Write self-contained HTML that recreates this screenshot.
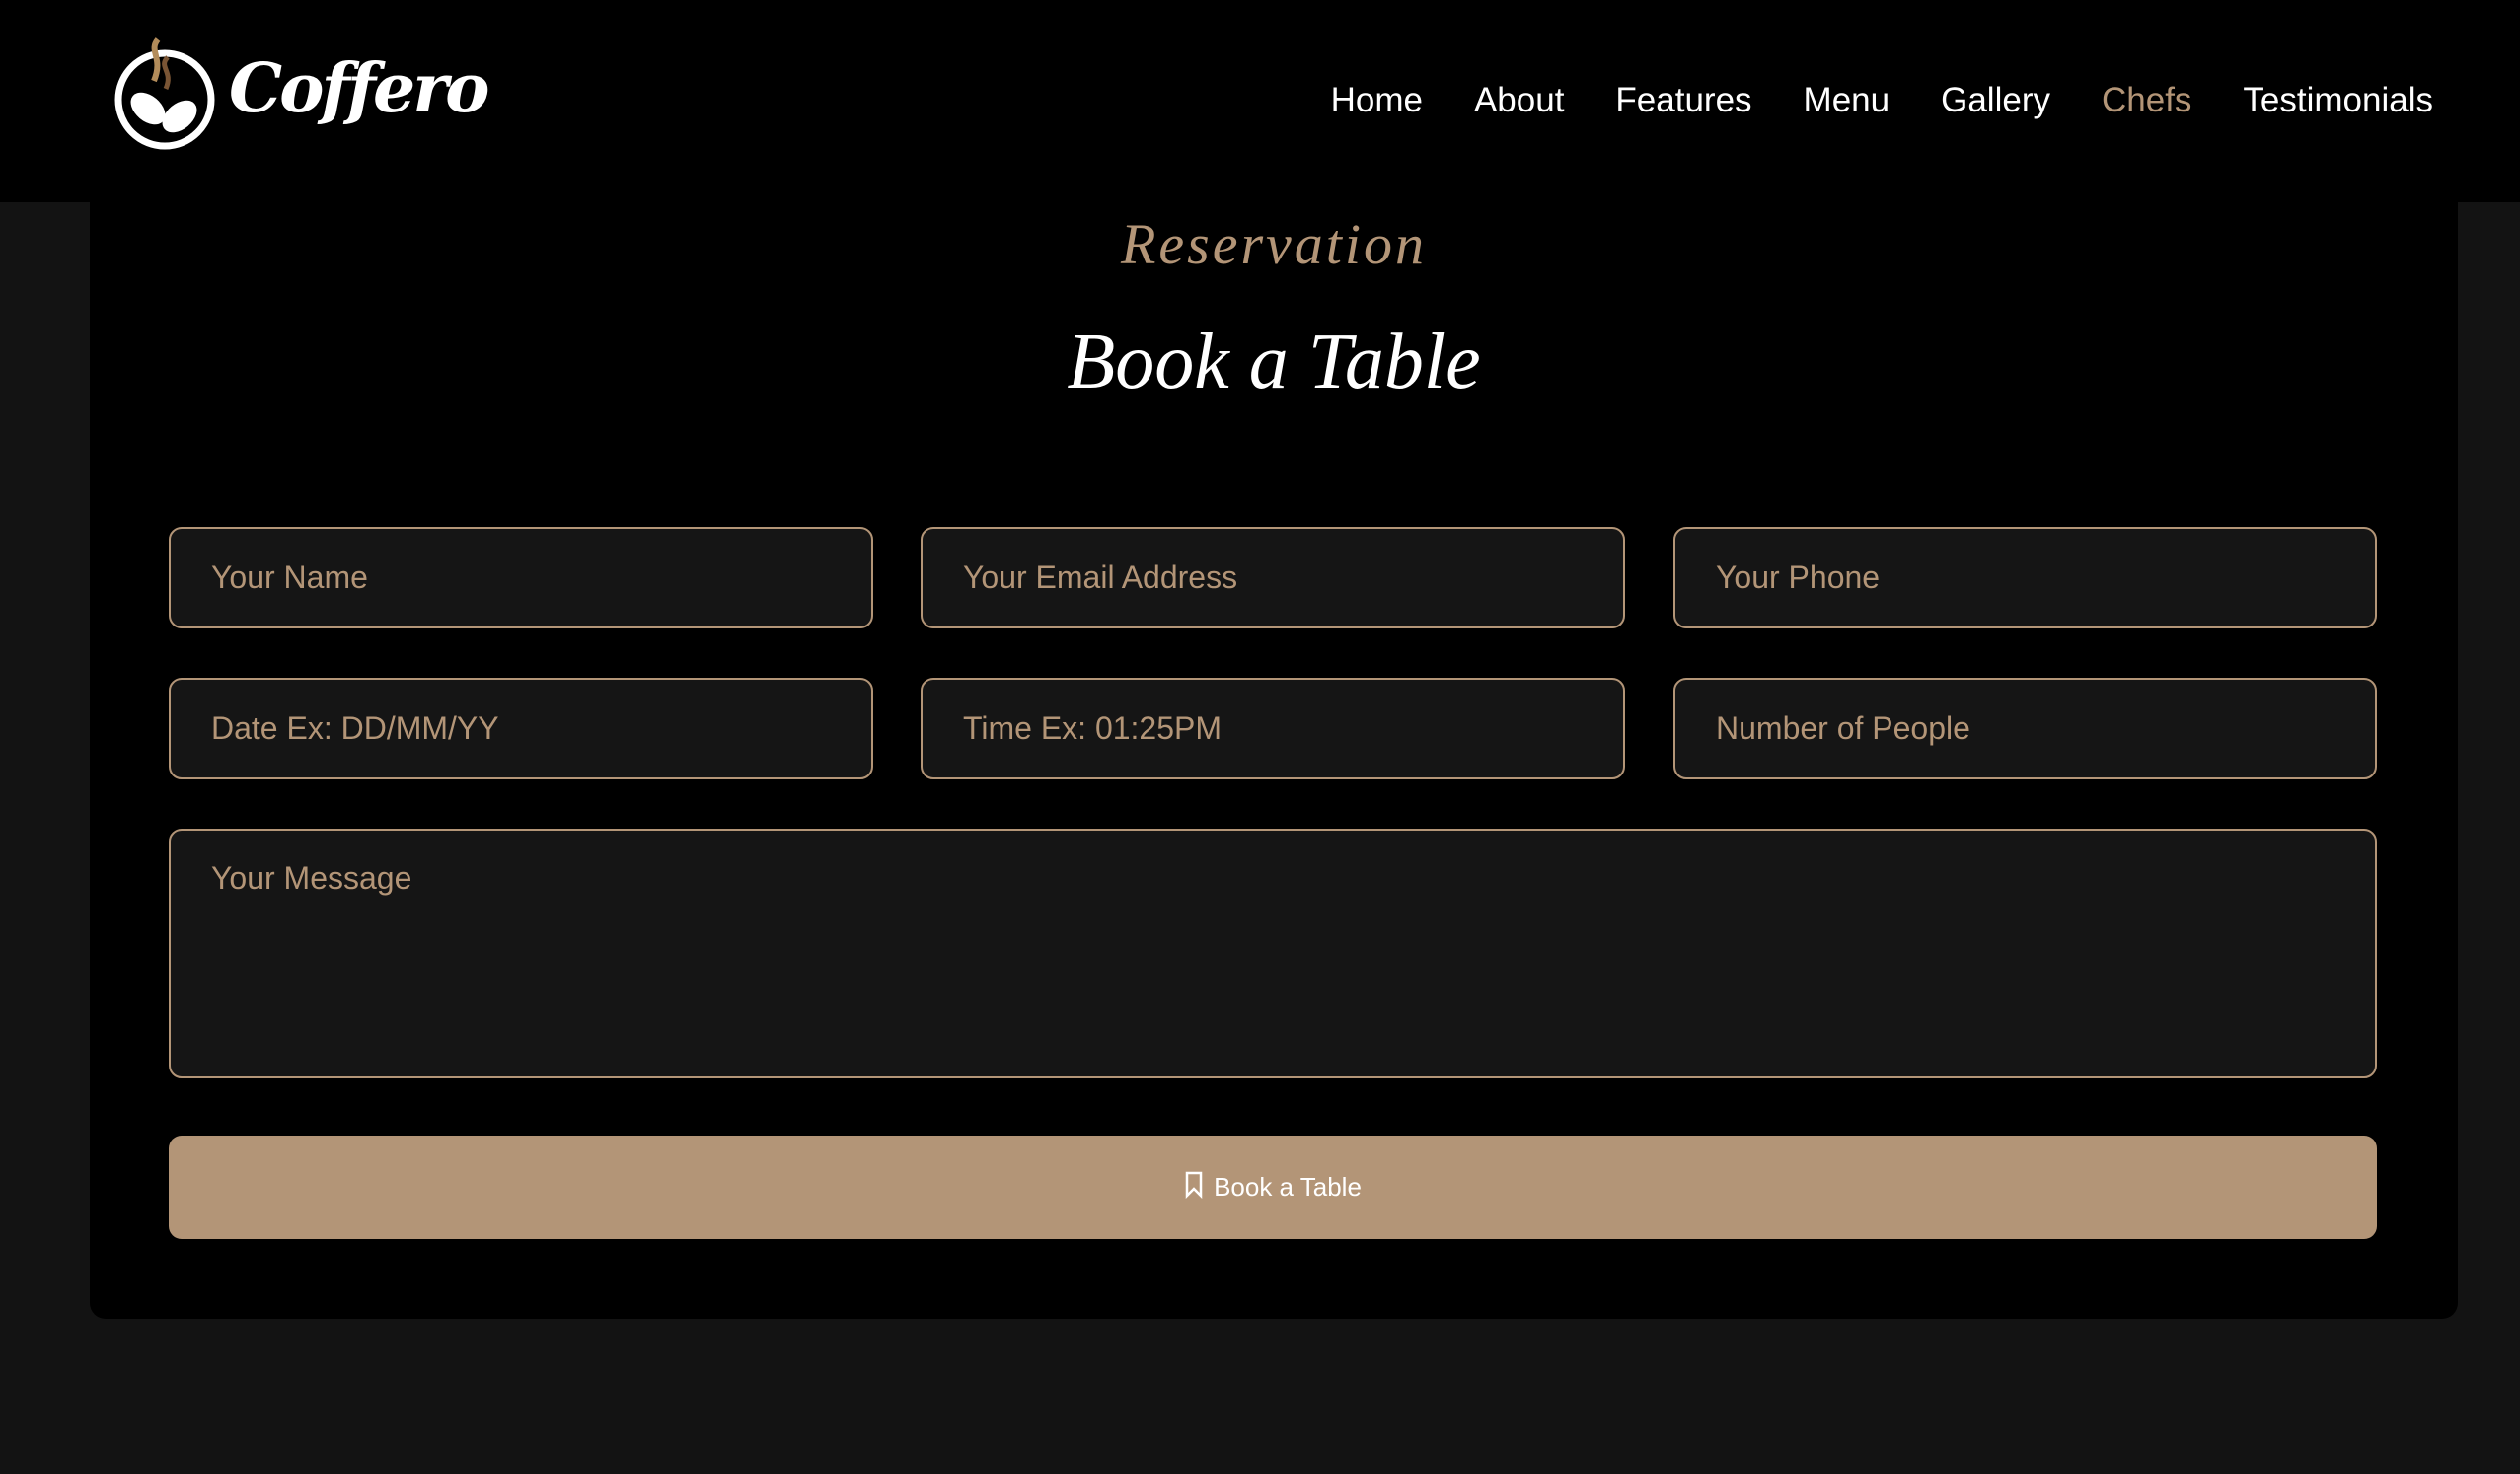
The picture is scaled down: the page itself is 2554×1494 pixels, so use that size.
<!DOCTYPE html>
<html><head><meta charset="utf-8"><style>
*{margin:0;padding:0;box-sizing:border-box}
html,body{width:2554px;height:1494px;background:#131313;overflow:hidden;font-family:"Liberation Sans",sans-serif}
.hdr{position:absolute;left:0;top:0;width:2554px;height:205px;background:#000}
.nav{position:absolute;top:78px;right:88px;display:flex;gap:0}
.nav span{color:#fff;font-size:35px;margin-left:52px;line-height:48px}
.nav span.a{color:#b39577}
.main{position:absolute;left:91px;top:205px;width:2400px;height:1132px;background:#000;border-radius:0 0 16px 16px}
.sub{position:absolute;left:91px;width:2400px;text-align:center;top:214px;font-family:"Liberation Serif",serif;font-style:italic;color:#b39577;font-size:58px;letter-spacing:3px}
.ttl{position:absolute;left:91px;width:2400px;text-align:center;top:322px;font-family:"Liberation Serif",serif;font-style:italic;color:#fff;font-size:80px}
.in{position:absolute;background:#151515;border:2px solid #b39577;border-radius:13px;color:#b39577;font-size:32px;padding-left:41px;display:flex;align-items:center}
.ta{align-items:flex-start;padding-top:30px}
.btn{position:absolute;left:171px;top:1151px;width:2238px;height:105px;background:#b39577;border-radius:13px;color:#fff;font-size:26px;display:flex;align-items:center;justify-content:center}
</style></head><body>
<div class="hdr">
<svg style="position:absolute;left:112px;top:38px" width="110" height="120" viewBox="0 0 110 120">
<circle cx="55" cy="63" r="47" fill="none" stroke="#fff" stroke-width="7"/>
<path d="M48 2c-10 12 6 18-4 42" stroke="#b38c5a" stroke-width="6" fill="none"/>
<path d="M58 20c-10 10 6 14-2 32" stroke="#7a5535" stroke-width="5" fill="none"/>
<ellipse cx="38" cy="72" rx="13" ry="20" transform="rotate(-50 38 72)" fill="#fff"/>
<ellipse cx="70" cy="80" rx="13" ry="20" transform="rotate(50 70 80)" fill="#fff"/>
</svg>
<div style="position:absolute;left:232px;top:50px;color:#fff;font-family:'DejaVu Serif',serif;font-style:italic;font-weight:bold;font-size:68px;letter-spacing:-3px">Coffero</div>
<div class="nav"><span>Home</span><span>About</span><span>Features</span><span>Menu</span><span>Gallery</span><span class="a">Chefs</span><span>Testimonials</span></div>
</div>
<div class="main"></div>
<div class="sub">Reservation</div>
<div class="ttl">Book a Table</div>
<div class="in" style="left:171px;top:534px;width:714px;height:103px">Your Name</div>
<div class="in" style="left:933px;top:534px;width:714px;height:103px">Your Email Address</div>
<div class="in" style="left:1696px;top:534px;width:713px;height:103px">Your Phone</div>
<div class="in" style="left:171px;top:687px;width:714px;height:103px">Date Ex: DD/MM/YY</div>
<div class="in" style="left:933px;top:687px;width:714px;height:103px">Time Ex: 01:25PM</div>
<div class="in" style="left:1696px;top:687px;width:713px;height:103px">Number of People</div>
<div class="in ta" style="left:171px;top:840px;width:2238px;height:253px">Your Message</div>
<div class="btn"><svg width="20" height="28" viewBox="0 0 20 28" style="margin-right:10px;margin-top:-6px"><path d="M3 2h14v23l-7-7-7 7z" fill="none" stroke="#fff" stroke-width="2.5"/></svg>Book a Table</div>
</body></html>
